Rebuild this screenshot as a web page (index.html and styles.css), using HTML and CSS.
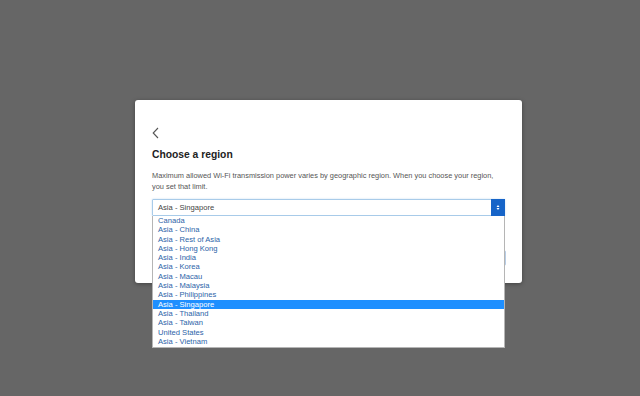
FILE: index.html
```html
<!DOCTYPE html>
<html>
<head>
<meta charset="utf-8">
<link rel="stylesheet" href="styles.css">
</head>
<body>
<div class="modal">
  <div class="back">
    <svg width="7" height="12" viewBox="0 0 7 12"><path d="M6 1 L1.2 6 L6 11" fill="none" stroke="#555" stroke-width="1.1"/></svg>
  </div>
  <h1 class="title">Choose a region</h1>
  <p class="desc">Maximum allowed Wi-Fi transmission power varies by geographic region. When you choose your region, you set that limit.</p>
  <div class="field">
    <div class="select">
      <span class="value">Asia - Singapore</span>
      <span class="arrow">
        <svg width="4" height="7" viewBox="0 0 4 7"><path d="M0.5 3 L2 1 L3.5 3 Z M0.5 4 L2 6 L3.5 4 Z" fill="#fff"/></svg>
      </span>
    </div>
    <ul class="list">
      <li>Canada</li>
      <li>Asia - China</li>
      <li>Asia - Rest of Asia</li>
      <li>Asia - Hong Kong</li>
      <li>Asia - India</li>
      <li>Asia - Korea</li>
      <li>Asia - Macau</li>
      <li>Asia - Malaysia</li>
      <li>Asia - Philippines</li>
      <li class="sel">Asia - Singapore</li>
      <li>Asia - Thailand</li>
      <li>Asia - Taiwan</li>
      <li>United States</li>
      <li>Asia - Vietnam</li>
    </ul>
  </div>
  <div class="actions">
    <button class="next">Next</button>
  </div>
</div>
</body>
</html>
```
FILE: styles.css
```css
html, body {
  margin: 0;
  height: 100%;
}
body {
  background: #666666;
  font-family: "Liberation Sans", Arial, sans-serif;
  padding: 100px 0 0 135px;
  box-sizing: border-box;
}
.modal {
  width: 387px;
  height: 183px;
  box-sizing: border-box;
  background: #fff;
  border-radius: 3px;
  box-shadow: 0 1px 4px rgba(0,0,0,0.35);
  padding: 27px 17px 0 17px;
  display: flex;
  flex-direction: column;
}
.back {
  height: 12px;
  display: flex;
  align-items: center;
}
.back svg { display: block; }
.title {
  margin: 9px 0 0 0;
  font-size: 10.3px;
  font-weight: bold;
  color: #222;
  line-height: 13px;
}
.desc {
  margin: 9px 0 0 0;
  font-size: 7.4px;
  line-height: 11px;
  color: #555;
}
.field {
  position: relative;
  margin-top: 7px;
}
.select {
  height: 17px;
  box-sizing: border-box;
  border: 1px solid #a8cbe9;
  border-radius: 1px;
  box-shadow: 0 0 2px rgba(100,160,220,0.4);
  display: flex;
  align-items: center;
  justify-content: space-between;
}
.value {
  padding-left: 5px;
  font-size: 7.6px;
  color: #444;
}
.arrow {
  width: 14px;
  height: 17px;
  margin: -1px -1px -1px 0;
  background: #1664c8;
  display: flex;
  align-items: center;
  justify-content: center;
}
.list {
  position: absolute;
  left: 0;
  right: 0;
  top: 17px;
  margin: 0;
  padding: 0 0 1px 0;
  list-style: none;
  background: #fff;
  border: 1px solid #b5b5b5;
  border-top: none;
  z-index: 2;
}
.list li {
  height: 9.3px;
  line-height: 9.3px;
  padding-left: 5px;
  font-size: 7.6px;
  color: #2b63a8;
  white-space: nowrap;
}
.list li.sel {
  background: #1e8fff;
  color: #fff;
}
.actions {
  display: flex;
  justify-content: flex-end;
  margin-top: 34px;
}
.next {
  width: 40px;
  height: 16px;
  margin-right: -1px;
  border: 1px solid #b7cde6;
  background: #fff;
  border-radius: 2px;
  font-size: 8px;
  color: #1664c8;
}
```
